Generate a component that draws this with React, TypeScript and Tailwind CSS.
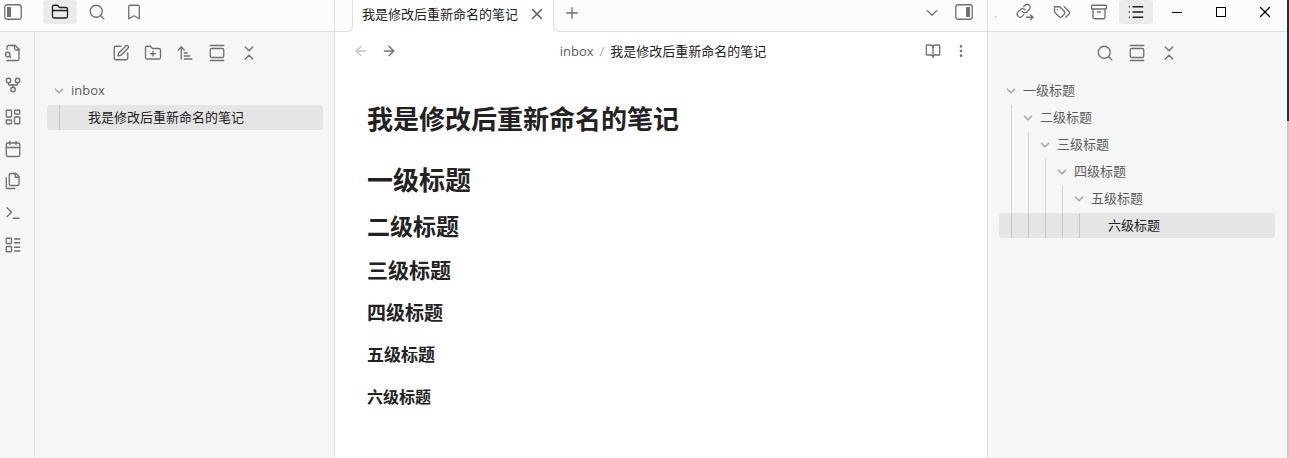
import React from "react";
import {
  Archive,
  ArrowLeft,
  ArrowRight,
  ArrowUpNarrowWide,
  Bookmark,
  BookOpen,
  Calendar,
  ChevronDown,
  ChevronsDownUp,
  EllipsisVertical,
  FolderClosed,
  FolderPlus,
  GalleryVertical,
  GitFork,
  LayoutDashboard,
  LayoutList,
  List,
  Plus,
  Search,
  SquarePen,
  Terminal,
  X,
} from "lucide-react";

type IconProps = { size?: number; strokeWidth?: number };
type IconType = React.ComponentType<IconProps>;

const Svg: React.FC<IconProps & { children: React.ReactNode }> = ({
  size = 18,
  strokeWidth = 2,
  children,
}) => (
  <svg
    width={size}
    height={size}
    viewBox="0 0 24 24"
    fill="none"
    stroke="currentColor"
    strokeWidth={strokeWidth}
    strokeLinecap="round"
    strokeLinejoin="round"
  >
    {children}
  </svg>
);

const FileSearch: React.FC<IconProps> = (props) => (
  <Svg {...props}>
    <path d="M4 22h14a2 2 0 0 0 2-2V7l-5-5H6a2 2 0 0 0-2 2v3" />
    <path d="M14 2v4a2 2 0 0 0 2 2h4" />
    <circle cx="5" cy="14" r="3" />
    <path d="m9 18-1.5-1.5" />
  </Svg>
);

const Files: React.FC<IconProps> = (props) => (
  <Svg {...props}>
    <path d="M15 2v5h5" />
    <path d="M9 18a2 2 0 0 1-2-2V4a2 2 0 0 1 2-2h7l4 4v10a2 2 0 0 1-2 2Z" />
    <path d="M3 7.6v12.8A1.6 1.6 0 0 0 4.6 22h9.8" />
  </Svg>
);

const OutgoingLinks: React.FC<IconProps> = (props) => (
  <Svg {...props}>
    <path d="M8.5 11.5a4 4 0 0 0 6 .4l3.2-3.2a4 4 0 0 0-5.7-5.7l-1.8 1.8" />
    <path d="M12 9a4 4 0 0 0-6-.4l-3.2 3.2a4 4 0 0 0 5.7 5.7l1.8-1.8" />
    <path d="M14 19h8.5" />
    <path d="m19.5 16 3 3-3 3" />
  </Svg>
);

const Tags: React.FC<IconProps> = (props) => (
  <Svg {...props}>
    <path d="M9 5H2v7l6.29 6.29c.94.94 2.48.94 3.42 0l3.58-3.58c.94-.94.94-2.48 0-3.42L9 5Z" />
    <path d="M6 9.01V9" />
    <path d="m15 5 6.3 6.3a2.4 2.4 0 0 1 0 3.4L17 19" />
  </Svg>
);

const SidebarToggle: React.FC<{ side: "left" | "right" }> = ({ side }) => (
  <svg width="18" height="16" viewBox="0 0 18 16" fill="none">
    <rect
      x="0.75"
      y="0.75"
      width="16.5"
      height="14.5"
      rx="2.5"
      stroke="currentColor"
      strokeWidth="1.3"
    />
    <rect
      x={side === "left" ? 3 : 11}
      y="3"
      width="4"
      height="10"
      rx="0.5"
      fill="currentColor"
    />
  </svg>
);

const ribbon: { label: string; icon: IconType }[] = [
  { label: "快速切换", icon: FileSearch },
  { label: "关系图谱", icon: GitFork },
  { label: "新建白板", icon: LayoutDashboard },
  { label: "今日日记", icon: Calendar },
  { label: "插入模板", icon: Files },
  { label: "命令面板", icon: Terminal },
  { label: "数据库", icon: LayoutList },
];

const leftTabs: { label: string; icon: IconType }[] = [
  { label: "文件列表", icon: FolderClosed },
  { label: "搜索", icon: Search },
  { label: "书签", icon: Bookmark },
];

const rightTabs: { label: string; icon: IconType }[] = [
  { label: "出链", icon: OutgoingLinks },
  { label: "标签", icon: Tags },
  { label: "归档", icon: Archive },
  { label: "大纲", icon: List },
];

const fileTools: { label: string; icon: IconType }[] = [
  { label: "新建笔记", icon: SquarePen },
  { label: "新建文件夹", icon: FolderPlus },
  { label: "排序", icon: ArrowUpNarrowWide },
  { label: "自动定位", icon: GalleryVertical },
  { label: "全部折叠", icon: ChevronsDownUp },
];

const outlineTools: { label: string; icon: IconType }[] = [
  { label: "搜索大纲", icon: Search },
  { label: "自动定位大纲", icon: GalleryVertical },
  { label: "折叠大纲", icon: ChevronsDownUp },
];

const noteTitle = "我是修改后重新命名的笔记";
const files = ["inbox", noteTitle];
const outline = [
  "一级标题",
  "二级标题",
  "三级标题",
  "四级标题",
  "五级标题",
  "六级标题",
];

const TabButton: React.FC<{ label: string; icon: IconType; active: boolean }> = ({
  label,
  icon: Icon,
  active,
}) => (
  <button
    aria-label={label}
    className={
      active
        ? "flex h-6 w-[34px] items-center justify-center rounded bg-[#ebebeb] text-[#222222]"
        : "flex h-6 w-[34px] items-center justify-center rounded text-[#707070]"
    }
  >
    <Icon size={18} strokeWidth={1.75} />
  </button>
);

const Toolbar: React.FC<{ items: { label: string; icon: IconType }[] }> = ({
  items,
}) => (
  <div className="mb-1 flex h-[42px] items-center justify-center text-[#707070]">
    {items.map(({ label, icon: Icon }) => (
      <button
        key={label}
        aria-label={label}
        className="flex h-7 w-8 items-center justify-center"
      >
        <Icon size={18} strokeWidth={1.75} />
      </button>
    ))}
  </div>
);

// Every item sits one level below the previous one, the last one is selected
const Tree: React.FC<{ items: string[] }> = ({ items }) => (
  <ul className="flex flex-col gap-0.5">
    {items.map((text, level) => {
      const last = level === items.length - 1;
      return (
        <li key={text}>
          <button
            className={
              last
                ? "flex h-[25px] w-full rounded bg-[#e5e5e5] pl-3 text-left text-[#222222]"
                : "flex h-[25px] w-full rounded pl-3 text-left text-[#5c5c5c]"
            }
          >
            {items.slice(0, level).map((parent) => (
              <span
                key={parent}
                className={
                  last
                    ? "w-[17px] self-stretch border-l border-[#c8c8c8]"
                    : "-mb-0.5 w-[17px] self-stretch border-l border-[#d4d4d4]"
                }
              />
            ))}
            <span className="-ml-3 flex w-6 items-center justify-center self-stretch text-[#ababab]">
              {!last && <ChevronDown size={14} strokeWidth={3} />}
            </span>
            <span className="leading-6">{text}</span>
          </button>
        </li>
      );
    })}
  </ul>
);

const TitleBar: React.FC = () => (
  <header className="flex h-8 bg-[#fcfcfc] text-[#707070]">
    <div className="flex w-[335px] shrink-0 items-start border-r border-b border-[#e0e0e0]">
      <button
        aria-label="折叠左侧栏"
        className="flex h-6 w-[43px] items-center pl-1"
      >
        <SidebarToggle side="left" />
      </button>
      <div className="flex gap-[3px]">
        {leftTabs.map((tab, i) => (
          <TabButton key={tab.label} {...tab} active={i === 0} />
        ))}
      </div>
    </div>

    <div className="flex min-w-0 flex-1 bg-white">
      <div className="w-[18px] rounded-br-md border-r border-b border-[#e0e0e0] bg-[#fcfcfc]" />
      <div className="flex items-start bg-white pr-[7px] pl-[9px] text-[#222222]">
        <span className="text-[13px] leading-7 whitespace-nowrap">
          {noteTitle}
        </span>
        <button
          aria-label="关闭标签页"
          className="ml-[10px] flex h-7 w-[18px] items-center justify-center text-[#5c5c5c]"
        >
          <X size={18} strokeWidth={2} />
        </button>
      </div>
      <div className="flex flex-1 items-start justify-between rounded-bl-md border-b border-l border-[#e0e0e0] bg-[#fcfcfc] pr-[14px] pl-2">
        <button
          aria-label="新建标签页"
          className="flex h-[26px] w-5 items-center justify-center"
        >
          <Plus size={18} strokeWidth={1.75} />
        </button>
        <div className="flex gap-3">
          <button
            aria-label="标签页列表"
            className="flex h-[26px] w-[22px] items-center justify-center"
          >
            <ChevronDown size={18} strokeWidth={1.75} />
          </button>
          <button
            aria-label="折叠右侧栏"
            className="flex h-6 w-[18px] items-center justify-center"
          >
            <SidebarToggle side="right" />
          </button>
        </div>
      </div>
    </div>

    <div className="flex w-[300px] shrink-0 items-start border-b border-l border-[#e0e0e0]">
      <div className="flex h-6 w-5 items-end pb-[7px] pl-[7px]">
        <span className="size-px bg-[#ababab]" />
      </div>
      <div className="flex gap-[3px]">
        {rightTabs.map((tab, i) => (
          <TabButton key={tab.label} {...tab} active={i === 3} />
        ))}
      </div>
      <div className="flex flex-1 justify-end text-black">
        <button
          aria-label="最小化"
          className="flex h-6 w-11 items-center justify-center"
        >
          <span className="h-px w-[10px] bg-black" />
        </button>
        <button
          aria-label="最大化"
          className="flex h-6 w-11 items-center justify-center"
        >
          <span className="size-[10px] border border-black" />
        </button>
        <button
          aria-label="关闭"
          className="flex h-6 w-11 items-center justify-center"
        >
          <X size={18} strokeWidth={1.75} />
        </button>
      </div>
    </div>
  </header>
);

const Note: React.FC = () => (
  <main className="min-w-0 flex-1 bg-white">
    <div className="flex h-[38px] items-center px-3 text-[#707070]">
      <button
        aria-label="后退"
        className="flex size-7 items-center justify-center text-[#c4c4c4]"
      >
        <ArrowLeft size={16} strokeWidth={2} />
      </button>
      <button
        aria-label="前进"
        className="flex size-7 items-center justify-center"
      >
        <ArrowRight size={16} strokeWidth={2} />
      </button>
      <nav className="flex flex-1 items-center justify-center gap-1.5 pl-1 text-[13px] leading-5">
        <a href="#inbox" className="text-[#5c5c5c]">
          inbox
        </a>
        <span className="text-[#ababab]">/</span>
        <span className="text-[#222222]">{noteTitle}</span>
      </nav>
      <button
        aria-label="阅读视图"
        className="flex size-7 items-center justify-center"
      >
        <BookOpen size={16} strokeWidth={2} />
      </button>
      <button
        aria-label="更多选项"
        className="flex size-7 items-center justify-center"
      >
        <EllipsisVertical size={16} strokeWidth={2} />
      </button>
    </div>

    <article className="px-8 pt-[31px] pb-12 font-bold text-[#222222]">
      <h1 className="mb-[25px] text-[26px] leading-9">{noteTitle}</h1>
      <div className="flex flex-col gap-3">
        <h1 className="text-[26px] leading-9">一级标题</h1>
        <h2 className="text-[23px] leading-8">二级标题</h2>
        <h3 className="text-[21px] leading-8">三级标题</h3>
        <h4 className="text-[19px] leading-[30px]">四级标题</h4>
        <h5 className="text-[17px] leading-[30px]">五级标题</h5>
        <h6 className="text-[16px] leading-[30px]">六级标题</h6>
      </div>
    </article>
  </main>
);

const App: React.FC = () => {
  return (
    <div
      lang="zh-CN"
      className="flex min-h-screen font-['Open_Sans','Noto_Sans_CJK_SC',sans-serif] text-[13px]"
    >
      <div className="flex min-w-0 flex-1 flex-col">
        <TitleBar />
        <div className="flex flex-1">
          <nav className="flex w-[35px] shrink-0 flex-col border-r border-[#e0e0e0] bg-[#f6f6f6] pt-[5px] text-[#707070]">
            {ribbon.map(({ label, icon: Icon }) => (
              <button
                key={label}
                aria-label={label}
                className="flex h-8 w-[26px] items-center justify-center"
              >
                <Icon size={18} strokeWidth={1.75} />
              </button>
            ))}
          </nav>
          <aside className="w-[300px] shrink-0 border-r border-[#e0e0e0] bg-[#f6f6f6] pr-[11px] pl-3">
            <Toolbar items={fileTools} />
            <Tree items={files} />
          </aside>
          <Note />
          <aside className="w-[300px] shrink-0 border-l border-[#e0e0e0] bg-[#f6f6f6] pr-3 pl-[11px]">
            <Toolbar items={outlineTools} />
            <Tree items={outline} />
          </aside>
        </div>
      </div>
      <div className="w-0.5 shrink-0 bg-[#c8c8c8]">
        <div className="h-[121px] bg-[#2b2d3a]" />
      </div>
    </div>
  );
};

export default App;
